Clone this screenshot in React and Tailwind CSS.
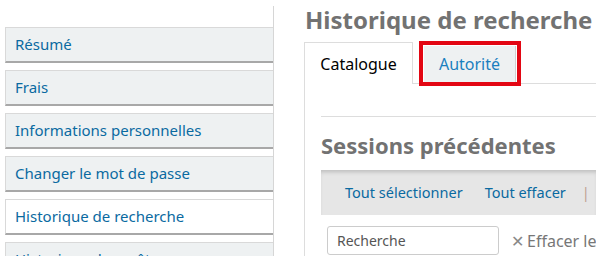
export default function App() {
  const items = [
    "Résumé",
    "Frais",
    "Informations personnelles",
    "Changer le mot de passe",
    "Historique de recherche",
    "Historique des prêts",
  ];
  return (
    <div
      className="w-[596px] h-[256px] overflow-hidden bg-white flex"
      style={{ fontFamily: '"Noto Sans", "Open Sans", sans-serif' }}
    >
      <div className="w-[274px] shrink-0 pl-[5px] pt-[6px]">
        <div className="border-r border-[#d6d6d6] pt-[21px] flex flex-col gap-[7px] h-[300px]">
          {items.map((t) => {
            const active = t === "Historique de recherche";
            return (
              <div
                key={t}
                className={`h-[36px] flex items-center pl-[9px] border-l border-t border-[#d9d9d9] border-b-2 border-b-[#a8a8a8] text-[15px] text-[#0a6aa1] whitespace-nowrap overflow-hidden ${
                  active ? "bg-white" : "bg-[#eef1f2]"
                }`}
              >
                {t}
              </div>
            );
          })}
        </div>
      </div>
      <div className="flex-1 pl-[30px] min-w-0">
        <h1 className="text-[24px] leading-[29px] font-bold text-[#727272] whitespace-nowrap mt-[5px] ml-[1px]">
          Historique de recherche
        </h1>
        <div className="mt-[9px] flex items-end h-[41px] border-b border-[#dddddd] relative">
          <div className="w-[109px] h-[42px] -mb-px bg-white border-l border-t border-r border-[#dddddd] flex items-center justify-center text-[16px] text-black">
            Catalogue
          </div>
          <div className="relative ml-[11px] mb-[1px] w-[92px] h-[36px] bg-[#eef1f2] border-r border-[#d0d0d0] flex items-center justify-center text-[16px] text-[#1a80bf]">
            Autorité
            <div className="absolute -left-[5px] -right-[6px] -top-[5px] -bottom-[4px] border-4 border-[#e30613]" />
          </div>
        </div>
        <div className="border-l border-[#dddddd] pl-[16px] h-[200px]">
          <div className="pt-[32px]">
            <div className="border-t border-[#dddddd]" />
          </div>
          <h2 className="mt-[15px] text-[22px] leading-[26px] font-bold text-[#727272] whitespace-nowrap">
            Sessions précédentes
          </h2>
          <div className="mt-[12px] h-[45px] bg-[#e6e6e6] shadow-[inset_0_4px_4px_-2px_rgba(0,0,0,0.18)] flex items-center pl-[24px] text-[14.5px] text-[#0a6aa1] whitespace-nowrap">
            <span>Tout sélectionner</span>
            <span className="ml-[22px]">Tout effacer</span>
            <span className="ml-[16px] text-[#c0a090]">|</span>
          </div>
          <div className="mt-[11px] flex items-center whitespace-nowrap">
            <div className="shrink-0 ml-[6px] w-[172px] h-[29px] border border-[#cccccc] rounded-[3px] flex items-center pl-[9px] text-[14px] text-[#555555]">
              Recherche
            </div>
            <span className="shrink-0 ml-[12px] text-[16px] text-[#777777] flex items-center">
              <span className="text-[#888] mr-[3px]">✕</span>Effacer le filtre
            </span>
          </div>
        </div>
      </div>
    </div>
  );
}
